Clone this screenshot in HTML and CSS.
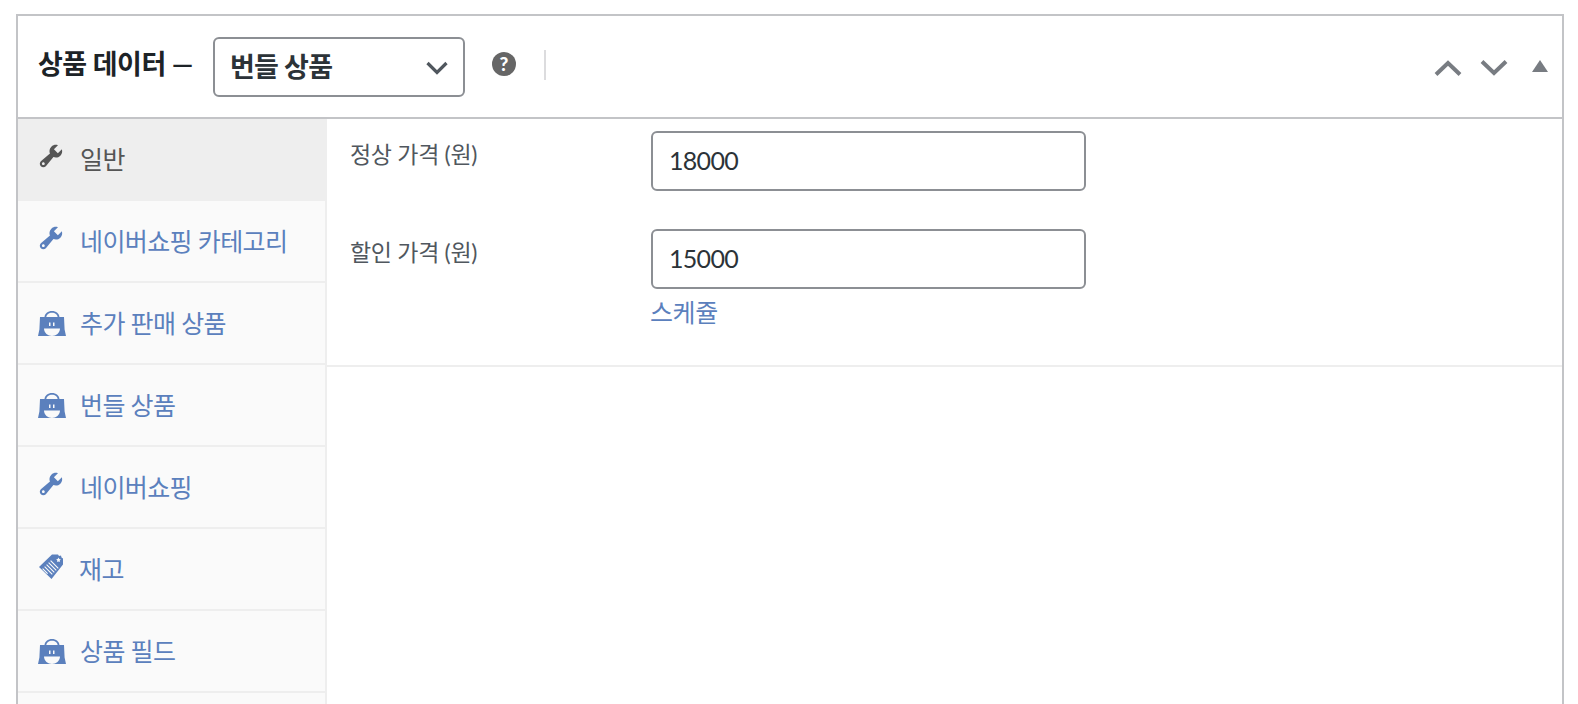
FILE: index.html
```html
<!DOCTYPE html>
<html lang="ko">
<head>
<meta charset="utf-8">
<title>상품 데이터</title>
<link rel="stylesheet" href="styles.css">
</head>
<body>
<svg class="defs" width="0" height="0" aria-hidden="true">
  <symbol id="wrench" viewBox="0 0 20 20"><path d="M16.680 9.770c-1.340 1.340-3.300 1.670-4.950.99l-5.410 6.520c-.99.99-2.590.99-3.580 0s-.99-2.590 0-3.570l6.520-5.420c-.68-1.650-.35-3.610.99-4.950 1.280-1.280 3.120-1.620 4.720-1.060l-2.890 2.890 2.820 2.820 2.860-2.870c.53 1.580.18 3.390-1.080 4.690zM3.810 16.210c.4.39 1.040.39 1.430 0 .4-.4.4-1.040 0-1.430-.39-.4-1.030-.4-1.430 0-.39.39-.39 1.030 0 1.430z"/></symbol>
  <symbol id="bag" viewBox="0 0 28 25"><path d="M6.500 6.500C6.500 2.500 10 0 14 0s7.500 2.500 7.500 6.500h-1.800C19.700 3.500 17 1.800 14 1.800S8.300 3.500 8.300 6.500z"/><path fill-rule="evenodd" d="M2 6h24l.6 12.500L28 25H0l1.400-6.500zM11 11.500V15h1.500v-3.500zm4 0V15h1.500v-3.500zM6 17.500C6 22 10 25 14 25s8-3 8-7.500z"/></symbol>
  <symbol id="tag" viewBox="0 0 25 25"><path fill-rule="evenodd" d="M13 .5h6l1 1.500 2-.5.5 2 1.500 1v6L12.500 25 0 13zM19.500 3.500l-.8 1.500-1.500.3 1.100 1.200-.2 1.500 1.400-.6 1.400.6-.2-1.500 1.100-1.200-1.500-.3zM12 6.300l-.8.8 7.700 7.700.8-.8zM10 8.300l-.8.800 7.700 7.700.8-.8zM8 10.300l-.8.800 7.700 7.700.8-.8zM6 12.300l-.8.800 7.700 7.700.8-.8zM4 14.300l-.8.800 5 5 .8-.8z"/></symbol>
</svg>
<section class="panel">
  <header class="panel-head">
    <h2 class="panel-title">상품 데이터 —</h2>
    <div class="select"><span class="select-value">번들 상품</span>
      <svg class="select-arrow" viewBox="0 0 24 16"><path d="M2.500 3l9.500 9.500L21.500 3" fill="none" stroke="currentColor" stroke-width="3.200"/></svg>
    </div>
    <span class="help">?</span>
    <span class="divider"></span>
    <div class="head-actions">
      <svg class="chev" viewBox="0 0 28 16"><path d="M2 14.500L14 3l12 11.500" fill="none" stroke="currentColor" stroke-width="4"/></svg>
      <svg class="chev" viewBox="0 0 28 16"><path d="M2 1.500L14 13 26 1.500" fill="none" stroke="currentColor" stroke-width="4"/></svg>
      <svg class="tri" viewBox="0 0 16 12"><path d="M8 0l8 12H0z" fill="currentColor"/></svg>
    </div>
  </header>
  <div class="panel-body">
    <nav class="tabs">
      <a class="tab tab-active"><svg class="ico"><use href="#wrench"/></svg>일반</a>
      <a class="tab"><svg class="ico"><use href="#wrench"/></svg>네이버쇼핑 카테고리</a>
      <a class="tab"><svg class="ico ico-bag"><use href="#bag"/></svg>추가 판매 상품</a>
      <a class="tab"><svg class="ico ico-bag"><use href="#bag"/></svg>번들 상품</a>
      <a class="tab"><svg class="ico"><use href="#wrench"/></svg>네이버쇼핑</a>
      <a class="tab"><svg class="ico ico-tag"><use href="#tag"/></svg>재고</a>
      <a class="tab"><svg class="ico ico-bag"><use href="#bag"/></svg>상품 필드</a>
      <a class="tab"></a>
    </nav>
    <div class="content">
      <div class="group">
        <div class="field">
          <label class="field-label">정상 가격 (원)</label>
          <div class="field-box"><input class="input" type="text" value="18000"></div>
        </div>
        <div class="field">
          <label class="field-label">할인 가격 (원)</label>
          <div class="field-box"><input class="input" type="text" value="15000"><a class="schedule">스케쥴</a></div>
        </div>
      </div>
    </div>
  </div>
</section>
</body>
</html>
```
FILE: styles.css
```css
* { box-sizing: border-box; }
html, body { margin: 0; height: 100%; overflow: hidden; background: #fff; }
body {
  padding: 14px 14px 0 16px;
  font-family: "Lato", "Noto Sans CJK KR", sans-serif;
  color: #3c434a;
}
.defs { position: absolute; }
.panel {
  display: flex;
  flex-direction: column;
  height: 100%;
  overflow: hidden;
  border: 2px solid #c3c4c7;
  border-bottom: 0;
  background: #fff;
}
.panel-head {
  flex: none;
  display: flex;
  align-items: center;
  height: 103px;
  padding-left: 20px;
  padding-right: 14px;
  border-bottom: 2px solid #c3c4c7;
}
.panel-title {
  margin: -8px 20px 0 0;
  font-size: 27px;
  font-weight: 700;
  letter-spacing: -0.5px;
  color: #1d2327;
}
.select {
  display: flex;
  align-items: center;
  justify-content: space-between;
  width: 252px;
  height: 60px;
  padding: 0 14px 0 15px;
  border: 2px solid #8c8f94;
  border-radius: 6px;
  font-size: 27px;
  font-weight: 700;
  letter-spacing: -0.7px;
  color: #2c3338;
}
.select-value { margin-top: -3px; }
.select-arrow { width: 24px; height: 16px; margin-top: 2px; color: #50575e; }
.help {
  display: flex;
  align-items: center;
  justify-content: center;
  width: 24px;
  height: 24px;
  margin: -6px 0 0 27px;
  border-radius: 50%;
  background: #666;
  color: #fff;
  font-size: 19px;
  font-weight: 900;
}
.divider { width: 2px; height: 30px; margin: -4px 0 0 28px; background: #dcdcde; }
.head-actions { display: flex; align-items: center; margin-left: auto; color: #787c82; }
.chev { width: 28px; height: 16px; margin-right: 18px; margin-top: 2px; }
.tri { width: 16px; height: 12px; margin-left: 6px; margin-top: -2px; }
.panel-body { flex: 1; display: flex; min-height: 0; }
.tabs {
  flex: none;
  width: 309px;
  border-right: 2px solid #eee;
  background: #fafafa;
}
.tab {
  display: flex;
  align-items: center;
  height: 82px;
  padding: 0 0 3px 19px;
  border-bottom: 2px solid #eee;
  font-size: 25px;
  letter-spacing: -0.6px;
  color: #5b80bd;
}
.tab-active {
  width: 309px;
  padding-bottom: 5px;
  background: #eee;
  color: #555;
  border-bottom: 0;
}
.ico { flex: none; width: 28px; height: 28px; margin: -3px 15px 0 0; fill: #5b80bd; }
.ico-bag { height: 25px; margin: 3px 14px 0 1px; }
.ico-tag { width: 25px; height: 25px; margin: -2px 15px 0 2px; }
.tab-active .ico { fill: #555; margin-top: -3px; }
.content { flex: 1; }
.group { padding: 12px 0 36px; border-bottom: 2px solid #eee; }
.field { display: flex; padding-left: 23px; }
.field + .field { margin-top: 38px; }
.field-label { width: 301px; padding-top: 5px; font-size: 23px; letter-spacing: -0.3px; color: #50575e; }
.field-box { display: flex; flex-direction: column; align-items: flex-start; }
.input {
  width: 435px;
  height: 60px;
  padding: 0 16px 3px;
  border: 2px solid #8c8f94;
  border-radius: 6px;
  background: #fff;
  font: inherit;
  font-size: 25px;
  letter-spacing: -0.7px;
  color: #2c3338;
  outline: none;
}
.schedule { margin: 4px 0 0 -1px; font-size: 25px; letter-spacing: -0.4px; color: #5b80bd; }
```
